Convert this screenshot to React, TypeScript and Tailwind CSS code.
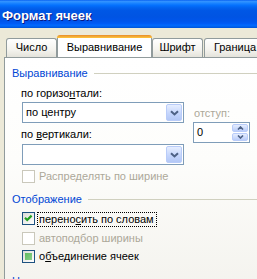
import type { ReactNode } from "react";

function Chevron() {
  return (
    <svg width="9" height="6" viewBox="0 0 9 6" aria-hidden="true">
      <path d="M1 1.2L4.5 4.5L8 1.2" fill="none" stroke="#4D6185" strokeWidth="2" />
    </svg>
  );
}

function DropButton() {
  return (
    <div className="flex w-[16px] items-center justify-center rounded-[2px] border border-[#B9CCF9] bg-[linear-gradient(to_bottom,#E6EEFF,#C3D4FC_60%,#B4C8F6)]">
      <Chevron />
    </div>
  );
}

function Combo({ value }: { value?: string }) {
  return (
    <div className="flex h-[21px] w-[162px] border border-[#7F9DB9] bg-white p-px">
      <div className="flex flex-1 items-center pl-[2px]">{value}</div>
      <DropButton />
    </div>
  );
}

function Spinner() {
  return (
    <div className="flex h-[21px] w-[57px] border border-[#7F9DB9] bg-white p-px">
      <div className="flex flex-1 items-center pl-[2px]">0</div>
      <div className="flex w-[16px] flex-col gap-px">
        <div className="flex flex-1 items-center justify-center rounded-[2px] border border-[#B9CCF9] bg-[linear-gradient(to_bottom,#E6EEFF,#B9CCF9)]">
          <svg width="7" height="4" viewBox="0 0 7 4" aria-hidden="true">
            <path d="M1 3.5L3.5 1L6 3.5" fill="none" stroke="#4D6185" strokeWidth="1.6" />
          </svg>
        </div>
        <div className="flex flex-1 items-center justify-center rounded-[2px] border border-[#B9CCF9] bg-[linear-gradient(to_bottom,#E6EEFF,#B9CCF9)]">
          <svg width="7" height="4" viewBox="0 0 7 4" aria-hidden="true">
            <path d="M1 0.5L3.5 3L6 0.5" fill="none" stroke="#4D6185" strokeWidth="1.6" />
          </svg>
        </div>
      </div>
    </div>
  );
}

type CheckState = "on" | "off" | "mixed" | "disabled";

function CheckBox({ state }: { state: CheckState }) {
  if (state === "disabled") {
    return <div className="h-[13px] w-[13px] shrink-0 border border-[#CAC8BB] bg-white" />;
  }
  return (
    <div className="flex h-[13px] w-[13px] shrink-0 items-center justify-center border border-[#1C5180] bg-[linear-gradient(135deg,#DCDCD7,#FFFFFF)]">
      {state === "on" && (
        <svg width="11" height="11" viewBox="0 0 11 11" aria-hidden="true">
          <path d="M2 4.8L4.2 7L8.6 2.6" fill="none" stroke="#21A121" strokeWidth="2.2" />
        </svg>
      )}
      {state === "mixed" && (
        <div className="h-[7px] w-[7px] bg-[linear-gradient(135deg,#5FBB5F,#8ACF8A)]" />
      )}
    </div>
  );
}

function Section({ title, className }: { title: string; className: string }) {
  return (
    <div className={`flex items-center gap-[6px] pl-[7px] ${className}`}>
      <span className="text-[#0046D5]">{title}</span>
      <div className="h-px flex-1 bg-[#D0D0BF]" />
    </div>
  );
}

function Tab({ children, active, className }: { children: ReactNode; active?: boolean; className: string }) {
  if (active) {
    return (
      <div className={`relative z-10 -mb-px flex h-[23px] shrink-0 flex-col ${className}`}>
        <div className="h-[3px] rounded-t-[3px] bg-[linear-gradient(to_bottom,#E68B2C,#FFC73C)]" />
        <div className="flex flex-1 justify-center border-x border-[#919B9C] bg-white pt-[3px]">{children}</div>
      </div>
    );
  }
  return (
    <div
      className={`flex h-[19px] shrink-0 justify-center rounded-t-[3px] border-x border-t border-[#919B9C] bg-[linear-gradient(to_bottom,#FFFFFF,#F4F3EE_60%,#E4E3DB)] pt-[2px] ${className}`}
    >
      {children}
    </div>
  );
}

export default function App() {
  return (
    <div className="h-[279px] w-[257px] overflow-hidden bg-[#ECE9D8] font-['Liberation_Sans',Arial,sans-serif] text-[11px] leading-[13px] text-black">
      <div className="h-[28px] bg-[linear-gradient(to_bottom,#0058EE_0%,#3593FF_4%,#288EFF_8%,#127DFF_14%,#036FFC_20%,#0262EE_28%,#0057E5_38%,#0054E3_60%,#0055EB_75%,#005BF5_84%,#026AFE_90%,#0062EF_95%,#0052D6_100%)] pl-[2px] pt-[8px] text-[13px] font-bold leading-[15px] text-white [text-shadow:1px_1px_0_#0A1883]">
        Формат ячеек
      </div>

      <div className="mt-[7px] flex h-[22px] items-end overflow-hidden pl-[6px]">
        <Tab className="w-[51px]">Число</Tab>
        <Tab active className="w-[95px]">
          Выравнивание
        </Tab>
        <Tab className="w-[51px]">Шрифт</Tab>
        <Tab className="ml-px w-[62px]">Граница</Tab>
      </div>

      <div className="ml-[4px] h-[230px] border-l border-t border-[#919B9C] bg-[linear-gradient(to_bottom,#FFFFFF_0%,#FDFDFB_45%,#F4F3EE_100%)]">
        <Section title="Выравнивание" className="mt-[9px]" />

        <div className="mt-[7px] flex">
          <div className="ml-[16px] flex w-[163px] flex-col">
            <div>
              по горизо<span className="underline">н</span>тали:
            </div>
            <div className="ml-px mt-[2px]">
              <Combo value="по центру" />
            </div>
            <div className="mt-[5px]">
              по <span className="underline">в</span>ертикали:
            </div>
            <div className="ml-px mt-[3px]">
              <Combo />
            </div>
            <div className="ml-px mt-[5px] flex items-center gap-[4px] text-[#ACA899]">
              <CheckBox state="disabled" />
              <span>Распределять по ширине</span>
            </div>
          </div>
          <div className="ml-[9px] flex flex-col">
            <div className="ml-px mt-[20px] text-[#ACA899]">отступ:</div>
            <div className="mt-[2px]">
              <Spinner />
            </div>
          </div>
        </div>

        <Section title="Отображение" className="mt-[10px]" />

        <div className="ml-[17px] flex flex-col">
          <div className="mt-[6px] flex items-start">
            <CheckBox state="on" />
            <span className="ml-[2px] border border-dotted border-black pl-px pr-[2px]">
              перено<span className="underline">с</span>ить по словам
            </span>
          </div>
          <div className="mt-[5px] flex items-center gap-[4px] text-[#ACA899]">
            <CheckBox state="disabled" />
            <span>автоподбор ширины</span>
          </div>
          <div className="mt-[5px] flex items-center gap-[4px]">
            <CheckBox state="mixed" />
            <span>
              о<span className="underline">б</span>ъединение ячеек
            </span>
          </div>
        </div>

        <Section title="Направление текста" className="mt-[12px]" />
      </div>
    </div>
  );
}
